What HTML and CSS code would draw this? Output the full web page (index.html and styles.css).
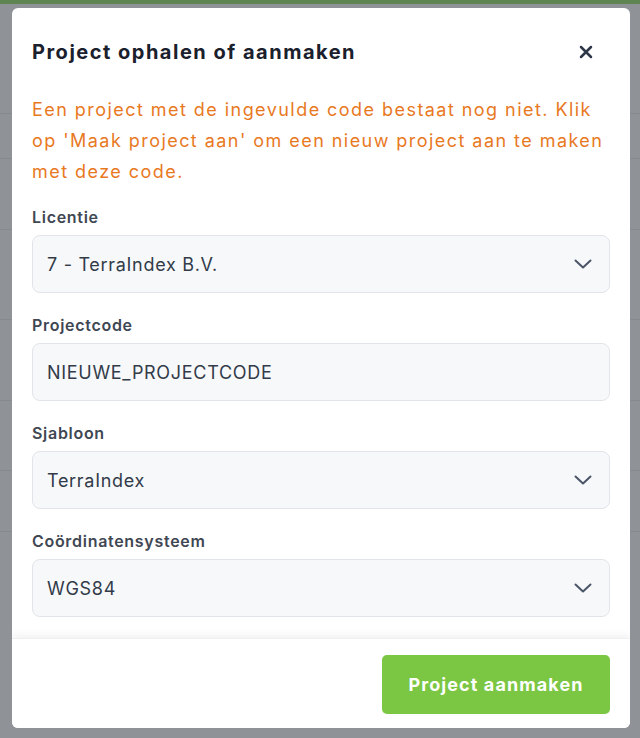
FILE: index.html
```html
<!DOCTYPE html>
<html lang="nl">
<head>
<meta charset="utf-8">
<title>Project ophalen of aanmaken</title>
<link rel="stylesheet" href="styles.css">
</head>
<body>
<div class="backdrop">
  <div class="topbar"></div>
  <div class="bg-rows">
    <div class="bg-row r1"></div>
    <div class="bg-row r2"></div>
    <div class="bg-row r3"></div>
    <div class="bg-row r4"></div>
    <div class="bg-row r5"></div>
    <div class="bg-row r6"></div>
    <div class="bg-row r7"></div>
  </div>
</div>
<div class="modal">
  <div class="modal-header">
    <h2 class="title">Project ophalen of aanmaken</h2>
    <button class="close" aria-label="Sluiten">
      <svg width="16" height="16" viewBox="0 0 16 16"><path d="M3 3 L13 13 M13 3 L3 13" stroke="#2d3748" stroke-width="2.5" stroke-linecap="round"/></svg>
    </button>
  </div>
  <div class="modal-body">
    <p class="warning">Een project met de ingevulde code bestaat nog niet. Klik op 'Maak project aan' om een nieuw project aan te maken met deze code.</p>
    <div class="field">
      <label class="label">Licentie</label>
      <div class="input select"><span>7 - TerraIndex B.V.</span>
        <svg class="chev" width="18" height="10" viewBox="0 0 18 10"><path d="M1.5 1.5 L9 8.5 L16.5 1.5" fill="none" stroke="#4a5568" stroke-width="2" stroke-linecap="round" stroke-linejoin="round"/></svg>
      </div>
    </div>
    <div class="field">
      <label class="label">Projectcode</label>
      <div class="input"><span>NIEUWE_PROJECTCODE</span></div>
    </div>
    <div class="field">
      <label class="label">Sjabloon</label>
      <div class="input select"><span>TerraIndex</span>
        <svg class="chev" width="18" height="10" viewBox="0 0 18 10"><path d="M1.5 1.5 L9 8.5 L16.5 1.5" fill="none" stroke="#4a5568" stroke-width="2" stroke-linecap="round" stroke-linejoin="round"/></svg>
      </div>
    </div>
    <div class="field">
      <label class="label">Coördinatensysteem</label>
      <div class="input select"><span>WGS84</span>
        <svg class="chev" width="18" height="10" viewBox="0 0 18 10"><path d="M1.5 1.5 L9 8.5 L16.5 1.5" fill="none" stroke="#4a5568" stroke-width="2" stroke-linecap="round" stroke-linejoin="round"/></svg>
      </div>
    </div>
  </div>
  <div class="modal-footer">
    <button class="primary">Project aanmaken</button>
  </div>
</div>
</body>
</html>
```
FILE: styles.css
```css
* { box-sizing: border-box; }
html, body { margin: 0; padding: 0; }
body {
  width: 640px;
  height: 738px;
  overflow: hidden;
  background: #8f9398;
  font-family: Inter, "Noto Sans", sans-serif;
  position: relative;
}
.backdrop {
  position: absolute;
  inset: 0;
}
.topbar {
  height: 4px;
  background: #5e8452;
}
.bg-rows { position: relative; }
.bg-row {
  position: absolute;
  left: 0;
  right: 0;
  height: 1px;
  background: #858990;
}
.r1 { top: 109px; }
.r2 { top: 154px; }
.r3 { top: 225px; }
.r4 { top: 315px; }
.r5 { top: 396px; }
.r6 { top: 466px; }
.r7 { top: 527px; }

.modal {
  position: absolute;
  left: 12px;
  top: 8px;
  width: 618px;
  height: 720px;
  background: #ffffff;
  border-radius: 6px;
  display: flex;
  flex-direction: column;
  overflow: hidden;
}
.modal-header {
  display: flex;
  align-items: center;
  justify-content: space-between;
  padding: 30px 20px 0 20px;
}
.title {
  margin: 0;
  font-size: 20px;
  line-height: 28px;
  font-weight: 700;
  color: #1a202c;
  letter-spacing: 1.5px;
}
.close {
  border: 0;
  background: transparent;
  padding: 0;
  margin-right: 16px;
  width: 16px;
  height: 16px;
  display: flex;
}
.modal-body {
  flex: 1;
  padding: 28px 20px 0 20px;
  display: flex;
  flex-direction: column;
  gap: 20px;
  overflow: hidden;
}
.warning {
  margin: 0 0 -2px 0;
  font-size: 18px;
  line-height: 31px;
  color: #e8791f;
  letter-spacing: 1.45px;
}
.field {
  display: flex;
  flex-direction: column;
  gap: 6px;
}
.label {
  font-size: 16px;
  line-height: 24px;
  font-weight: 600;
  color: #3f4753;
  letter-spacing: 0.7px;
}
.input {
  height: 58px;
  border: 1px solid #e1e4e9;
  background: #f7f8fa;
  border-radius: 8px;
  display: flex;
  align-items: center;
  justify-content: space-between;
  padding: 0 17px 0 14px;
  font-size: 18px;
  color: #323b49;
  letter-spacing: 0.7px;
}
.chev { display: block; }
.modal-footer {
  height: 90px;
  flex: none;
  display: flex;
  justify-content: flex-end;
  align-items: flex-start;
  padding: 16px 20px 0 20px;
  background: #ffffff;
  box-shadow: 0 -3px 8px rgba(0, 0, 0, 0.06);
  border-top: 1px solid #eeeff1;
}
.primary {
  width: 228px;
  height: 59px;
  border: 0;
  border-radius: 5px;
  background: #7bc642;
  color: #ffffff;
  font-family: Inter, "Noto Sans", sans-serif;
  font-size: 18px;
  font-weight: 700;
  letter-spacing: 1.1px;
}
```
